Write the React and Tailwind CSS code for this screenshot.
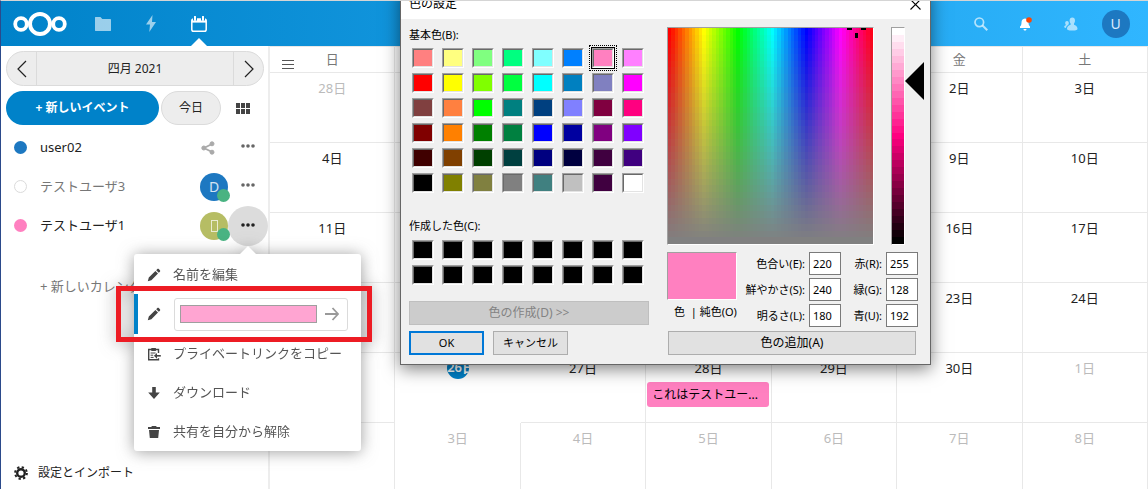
import { useState } from "react";

const WEEKDAYS = ["日", "月", "火", "水", "木", "金", "土"];

const WEEKS = [
  [28, 29, 30, 31, 1, 2, 3],
  [4, 5, 6, 7, 8, 9, 10],
  [11, 12, 13, 14, 15, 16, 17],
  [18, 19, 20, 21, 22, 23, 24],
  [25, 26, 27, 28, 29, 30, 1],
  [2, 3, 4, 5, 6, 7, 8],
];

const BASIC_COLORS = [
  "#ff8080", "#ffff80", "#80ff80", "#00ff80", "#80ffff", "#0080ff", "#ff80c0", "#ff80ff",
  "#ff0000", "#ffff00", "#80ff00", "#00ff40", "#00ffff", "#0080c0", "#8080c0", "#ff00ff",
  "#804040", "#ff8040", "#00ff00", "#008080", "#004080", "#8080ff", "#800040", "#ff0080",
  "#800000", "#ff8000", "#008000", "#008040", "#0000ff", "#0000a0", "#800080", "#8000ff",
  "#400000", "#804000", "#004000", "#004040", "#000080", "#000040", "#400040", "#400080",
  "#000000", "#808000", "#808040", "#808080", "#408080", "#c0c0c0", "#400040", "#ffffff",
];

const CUSTOM_COLORS = Array(16).fill("#000000");

function Logo() {
  return (
    <svg width="54" height="26" viewBox="0 0 54 26" fill="none" stroke="#fff" aria-hidden="true">
      <circle cx="8" cy="13" r="5.8" strokeWidth="3.8" />
      <circle cx="27" cy="13" r="10" strokeWidth="4" />
      <circle cx="46" cy="13" r="5.8" strokeWidth="3.8" />
    </svg>
  );
}

function PencilIcon() {
  return (
    <svg width="14" height="14" viewBox="0 0 14 14" fill="#444" aria-hidden="true">
      <path d="M10.3 1.1c.5-.5 1-.5 1.500 0l1.100 1.100c.5.5.5 1 0 1.500l-1.100 1.100-2.600-2.600zM8.400 3l2.600 2.600-6.600 6.600L.8 13.200l1-3.600z" />
    </svg>
  );
}

function ClipboardIcon() {
  return (
    <svg width="14" height="14" viewBox="0 0 14 14" fill="none" stroke="#444" strokeWidth="1.4" aria-hidden="true">
      <path d="M11.500 6V2.500H1.700v10.300h9.800v-1.600" />
      <path d="M4.300 2.500h4.600" strokeWidth="3" />
      <path d="M3.600 6h5M3.600 8.200h2.600M3.600 10.400h3" strokeWidth="1" />
      <path d="M13.800 8.800H8.200" strokeWidth="1.6" />
      <path d="M10 5.900L6.900 8.800l3.100 2.900z" fill="#444" stroke="none" />
    </svg>
  );
}

function DownloadIcon() {
  return (
    <svg width="14" height="14" viewBox="0 0 14 14" fill="#444" aria-hidden="true">
      <path d="M5.200 1h3.600v5.600h4L7 13 1.200 6.600h4z" />
    </svg>
  );
}

function TrashIcon() {
  return (
    <svg width="14" height="14" viewBox="0 0 14 14" fill="#444" aria-hidden="true">
      <path d="M5 1h4l.8 1H13v2H1V2h3.200zM2 5h10l-.8 8H2.800z" />
    </svg>
  );
}

function GearIcon() {
  return (
    <svg width="14" height="14" viewBox="0 0 14 14" fill="none" stroke="#222" aria-hidden="true">
      <circle cx="7" cy="7" r="3.8" strokeWidth="2.4" />
      <circle cx="7" cy="7" r="5.9" strokeWidth="2" strokeDasharray="2.3 2.33" />
    </svg>
  );
}

function DotsIcon({ color = "#666" }) {
  return (
    <svg width="14" height="4" viewBox="0 0 14 4" fill={color} aria-hidden="true">
      <circle cx="2" cy="2" r="1.8" />
      <circle cx="7" cy="2" r="1.8" />
      <circle cx="12" cy="2" r="1.8" />
    </svg>
  );
}

function Header() {
  return (
    <header className="flex h-[45px] shrink-0 items-stretch bg-[linear-gradient(90deg,#0082c9,#30b6ff)] pr-[10px]">
      <a href="#home" aria-label="ホーム" className="flex items-center pr-3 pl-3">
        <Logo />
      </a>
      <nav className="flex flex-1">
        <a href="#files" aria-label="ファイル" className="flex w-12 items-center justify-center">
          <svg width="16" height="14" viewBox="0 0 16 14" fill="#fff" fillOpacity=".6">
            <path d="M.5 0h5l1.800 2H15c.6 0 1 .3 1 1v10.500c0 .3-.2.5-.5.5H.5c-.3 0-.5-.2-.5-.5V.5C0 .2.2 0 .5 0z" />
          </svg>
        </a>
        <a href="#activity" aria-label="アクティビティ" className="flex w-12 items-center justify-center">
          <svg width="12" height="17" viewBox="0 0 12 17" fill="#fff" fillOpacity=".6">
            <path d="M7.500 0L1 9.500h4L4.300 17 11 7H7z" />
          </svg>
        </a>
        <a href="#calendar" aria-label="カレンダー" className="relative flex w-12 items-center justify-center">
          <svg width="16" height="16" viewBox="0 0 16 16" fill="none" stroke="#fff">
            <rect x=".8" y="3" width="14.4" height="12.2" rx="1.8" strokeWidth="1.5" />
            <path d="M1 4.800h14" strokeWidth="3.6" />
            <path d="M4 .5v4M12 .5v4" stroke="#0a8ad4" strokeWidth="4" />
            <path d="M4 .8v3.200M12 .8v3.200" strokeWidth="2" strokeLinecap="round" />
          </svg>
          <span className="absolute bottom-0 left-4 border-x-8 border-b-8 border-x-transparent border-b-white" />
        </a>
      </nav>
      <button aria-label="検索" className="flex w-[45px] items-center justify-center">
        <svg width="14" height="14" viewBox="0 0 14 14" fill="none" stroke="#fff" strokeOpacity=".65" strokeWidth="1.7">
          <circle cx="5.3" cy="5.3" r="4.3" />
          <path d="M8.500 8.500l4.800 4.700" strokeWidth="2" />
        </svg>
      </button>
      <button aria-label="通知" className="flex w-[45px] items-center justify-center">
        <svg width="16" height="14" viewBox="0 0 16 14" fill="#fff">
          <path d="M7 1.500c-2.500.3-3.500 2-3.500 4C3.500 8 2.800 8.700 2 9.600V11h10V9.600c-.9-.9-1.500-1.800-1.500-4 0-2-1-3.800-3.500-4.100z" />
          <path d="M5.500 12h3c0 2-3 2-3 0z" />
          <circle cx="11" cy="3" r="2.8" fill="#ff4402" />
        </svg>
      </button>
      <button aria-label="連絡先" className="flex w-[45px] items-center justify-center">
        <svg width="14" height="14" viewBox="0 0 14 14" fill="#fff" fillOpacity=".6">
          <path d="M8.300.5c1.700 0 2.700 1.200 2.700 3 0 1.500-.5 2.300-1 3v1.200c1.500.8 3.500 1.500 3.500 4 0 1-1 1.800-5.200 1.800S3 12.700 3 11.700C3 9.200 5 8.500 6.600 7.700V6.500c-.6-.7-1-1.500-1-3 0-1.800 1-3 2.700-3z" />
          <path d="M3 4c1.200 0 1.800.9 1.800 2 0 1-.3 1.500-.6 2-1.500.6-2 1.800-2.200 3-1.500-.1-1.800-.6-1.800-1C.2 9 1 8.500 2 8c-.5-.5-.8-1-.8-2C1.200 4.900 1.800 4 3 4z" />
        </svg>
      </button>
      <button aria-label="設定" className="flex w-[45px] items-center justify-center">
        <span className="flex size-7 items-center justify-center rounded-full bg-[#1d78c1] text-sm text-blue-100">U</span>
      </button>
    </header>
  );
}

function MenuItem({ icon, children }) {
  return (
    <button className="flex h-[39px] w-full items-center gap-3 pl-[13px] text-left text-[#555]">
      {icon}
      <span>{children}</span>
    </button>
  );
}

function CalendarMenu() {
  return (
    <div className="absolute top-12 left-[133px] z-10 w-[227px] rounded-[3px] bg-white pt-px drop-shadow-[0_1px_8px_rgba(77,77,77,0.55)]">
      <span className="absolute -top-2 left-[106px] border-x-8 border-b-8 border-x-transparent border-b-white" />
      <MenuItem icon={<PencilIcon />}>名前を編集</MenuItem>
      <div className="flex h-10 items-center gap-[13px] border-l-4 border-[#0082c9] pr-[13px] pl-[9px]">
        <PencilIcon />
        <div className="flex h-[33px] flex-1 items-center gap-2 rounded-[3px] border border-[#dbdbdb] pl-[5px]">
          <input
            type="color"
            aria-label="カレンダーの色"
            defaultValue="#ff80c0"
            className="h-[18px] w-[137px] appearance-none border border-[#777] opacity-70 [&::-webkit-color-swatch]:rounded-none [&::-webkit-color-swatch]:border-0 [&::-webkit-color-swatch-wrapper]:p-0"
          />
          <button aria-label="保存">
            <svg width="14" height="14" viewBox="0 0 14 14" fill="none" stroke="#999" strokeWidth="1.8">
              <path d="M0 7h13M7.500 1l5.500 6-5.500 6" />
            </svg>
          </button>
        </div>
      </div>
      <MenuItem icon={<ClipboardIcon />}>プライベートリンクをコピー</MenuItem>
      <MenuItem icon={<DownloadIcon />}>ダウンロード</MenuItem>
      <MenuItem icon={<TrashIcon />}>共有を自分から解除</MenuItem>
      <div className="pointer-events-none absolute top-8 -left-[18px] h-14 w-64 border-5 border-[#ed1c24]" />
    </div>
  );
}

function Avatar({ letter, className }) {
  return (
    <span className={`relative flex size-7 items-center justify-center rounded-full text-sm text-white/80 ${className}`}>
      {letter}
      <span className="absolute top-4 left-[17px] size-[13px] rounded-full bg-[#49b382]" />
    </span>
  );
}

function CalendarRow({ name, bullet, muted, active, children }) {
  return (
    <li className="relative flex h-[39px] items-center pl-[13px]">
      <span className={`size-[13px] rounded-full ${bullet}`} />
      <span className={`ml-[13px] flex-1 ${muted ? "text-[#777]" : "text-[#222]"}`}>{name}</span>
      {children}
      <button
        aria-label={`${name}のメニュー`}
        className={`flex size-10 items-center justify-center rounded-full ${active ? "bg-[#dcdcdc] pb-0.5" : "pb-1"}`}
      >
        <DotsIcon color={active ? "#222" : "#666"} />
      </button>
      {active && <CalendarMenu />}
    </li>
  );
}

function Sidebar() {
  return (
    <aside className="relative z-10 flex w-[269px] shrink-0 flex-col border-r-2 border-[#ededed] pt-[5px]">
      <div className="mr-1 ml-[5px] flex h-[35px] rounded-full border border-[#dbdbdb] bg-[#ededed]">
        <button aria-label="前の月" className="flex w-[30px] items-center justify-center border-r border-[#dbdbdb]">
          <svg width="10" height="18" viewBox="0 0 10 18" fill="none" stroke="#222" strokeWidth="1.2">
            <path d="M9 1L1 9l8 8" />
          </svg>
        </button>
        <button className="flex-1 text-xs text-[#222]">四月 2021</button>
        <button aria-label="次の月" className="flex w-[30px] items-center justify-center border-l border-[#dbdbdb]">
          <svg width="10" height="18" viewBox="0 0 10 18" fill="none" stroke="#222" strokeWidth="1.2">
            <path d="M1 1l8 8-8 8" />
          </svg>
        </button>
      </div>
      <div className="mt-[5px] mb-[3px] ml-[5px] flex h-[34px] gap-0.5">
        <button className="w-[153px] rounded-full bg-[#0082c9] text-xs font-bold text-white">+ 新しいイベント</button>
        <button className="w-[60px] rounded-full border border-[#dbdbdb] bg-[#ededed] text-xs text-[#222]">今日</button>
        <button aria-label="表示の切り替え" className="flex w-10 items-center justify-center">
          <svg width="14" height="11" viewBox="0 0 14 11" fill="#444">
            <path d="M0 0h4v5H0zM5 0h4v5H5zM10 0h4v5h-4zM0 6h4v5H0zM5 6h4v5H5zM10 6h4v5h-4z" />
          </svg>
        </button>
      </div>
      <ul>
        <CalendarRow name="user02" bullet="bg-[#1d78c1]">
          <button aria-label="共有" className="mr-[13px]">
            <svg width="14" height="14" viewBox="0 0 14 14" fill="#aaa" stroke="#aaa">
              <path d="M11 3L3 7l8 4" fill="none" strokeWidth="1.8" />
              <circle cx="11" cy="2.8" r="2" />
              <circle cx="2.8" cy="7" r="2" />
              <circle cx="11" cy="11.2" r="2" />
            </svg>
          </button>
        </CalendarRow>
        <CalendarRow name="テストユーザ3" bullet="border border-[#dbdbdb]" muted>
          <Avatar letter="D" className="bg-[#1d78c1]" />
        </CalendarRow>
        <CalendarRow name="テストユーザ1" bullet="bg-[#ff80c0]" active>
          <Avatar letter={<span className="h-3 w-[7px] border border-white/70" />} className="bg-[#b6bd64]" />
        </CalendarRow>
      </ul>
      <button className="mt-[22px] h-10 pl-[39px] text-left whitespace-nowrap text-[#777]">+ 新しいカレンダー</button>
      <button className="mt-auto mb-2 flex items-center gap-[10px] pl-[13px] text-xs text-[#222]">
        <GearIcon />
        設定とインポート
      </button>
    </aside>
  );
}

function DayCell({ day, outside, today, event }) {
  return (
    <td className={`h-[70px] border-[#e8e8e8] p-0 px-px pt-[7px] align-top ${today ? "" : "border-r border-b"}`}>
      {today ? (
        <span className="mx-auto -mt-[3px] flex size-[22px] items-center overflow-hidden rounded-full bg-[#0082c9] font-semibold whitespace-nowrap text-white">
          {day}日
        </span>
      ) : (
        <div className={`text-center leading-4 ${outside ? "text-[#bbb]" : "text-[#222]"}`}>{day}日</div>
      )}
      {event && (
        <a href="#event" className="mt-[6px] mr-px block h-[25px] truncate rounded-[3px] bg-[#ff80c0] px-[5px] text-xs leading-[25px] text-black">
          {event}
        </a>
      )}
    </td>
  );
}

function MonthGrid() {
  return (
    <main className="relative min-w-0 flex-1">
      <button aria-label="メニューを開く" className="absolute top-[14px] left-3 z-10">
        <svg width="12" height="10" viewBox="0 0 12 10" stroke="#555">
          <path d="M0 .5h12M0 4.500h12M0 8.500h12" />
        </svg>
      </button>
      <table className="w-full table-fixed border-separate border-spacing-0">
        <thead>
          <tr>
            {WEEKDAYS.map((day) => (
              <th key={day} className="h-[27px] border-t border-r border-b border-[#e8e8e8] p-0 font-normal text-[#777]">
                {day}
              </th>
            ))}
          </tr>
        </thead>
        <tbody>
          {WEEKS.map((week, row) => (
            <tr key={row}>
              {week.map((day, col) => (
                <DayCell
                  key={col}
                  day={day}
                  outside={(row === 0 && day > 7) || (row > 3 && day < 20)}
                  today={row === 4 && day === 26}
                  event={row === 4 && day === 28 ? "これはテストユー..." : null}
                />
              ))}
            </tr>
          ))}
        </tbody>
      </table>
    </main>
  );
}

function SwatchGrid({ colors, selected, onSelect }) {
  return (
    <div className="ml-[3px] grid w-fit grid-cols-8 gap-x-2 gap-y-[5px]">
      {colors.map((color, i) => (
        <button
          key={i}
          aria-label={color}
          onClick={() => onSelect && onSelect(i)}
          className={`h-5 w-[22px] border border-t-[#a0a0a0] border-r-white border-b-white border-l-[#a0a0a0] ${
            i === selected ? "ring-1 ring-black outline-1 outline-offset-2 outline-black outline-dotted" : ""
          }`}
        >
          <span
            className="block size-full border border-t-[#696969] border-r-[#e3e3e3] border-b-[#e3e3e3] border-l-[#696969]"
            style={{ backgroundColor: color }}
          />
        </button>
      ))}
    </div>
  );
}

// Hue runs left to right, saturation falls off to gray at the bottom.
function Spectrum() {
  const cols = 60;
  const rows = 33;
  return (
    <svg width="205" height="216" viewBox="0 0 60 33" preserveAspectRatio="none" shapeRendering="crispEdges" className="box-content border border-t-[#a0a0a0] border-r-white border-b-white border-l-[#a0a0a0]">
      {Array.from({ length: cols }, (_, i) => (
        <rect key={i} x={i} width={cols - i} height="33" fill={`hsl(${i * 6} 100% 50%)`} />
      ))}
      {Array.from({ length: rows }, (_, i) => (
        <rect key={i} y={i} width="60" height="1" fill="#808080" fillOpacity={i / (rows - 1)} />
      ))}
      <path d="M52.400 0h1.400v.3h-1.400zM56.500 0h1.400v.3h-1.400zM54.700.8h.9v.8h-.9z" />
    </svg>
  );
}

function LuminanceBar() {
  const steps = 31;
  return (
    <svg width="12" height="216" viewBox="0 0 12 31" preserveAspectRatio="none" shapeRendering="crispEdges" className="box-content border border-t-[#a0a0a0] border-r-white border-b-white border-l-[#a0a0a0]">
      {Array.from({ length: steps }, (_, i) => (
        <rect key={i} y={i} width="12" height={steps - i} fill={`hsl(330 100% ${100 - (i * 100) / (steps - 1)}%)`} />
      ))}
    </svg>
  );
}

function NumberField({ id, label, value }) {
  return (
    <div className="flex items-center justify-end gap-1">
      <label htmlFor={id} className="whitespace-nowrap">{label}</label>
      <input id={id} defaultValue={value} className="h-[23px] w-8 border border-[#7a7a7a] bg-white pl-[3px]" />
    </div>
  );
}

function DialogButton({ className = "", ...props }) {
  return <button className={`h-6 border border-[#adadad] bg-[#e1e1e1] ${className}`} {...props} />;
}

function ColorDialog() {
  const [selected, setSelected] = useState(6);

  return (
    <div
      role="dialog"
      aria-label="色の設定"
      className="absolute -top-[13px] left-[399px] z-20 w-[531px] border border-[#666] bg-[#f0f0f0] text-[11px] leading-4 text-black shadow-[0_4px_16px_rgba(0,0,0,0.5)]"
    >
      <div className="flex h-[30px] items-center justify-between bg-white pr-[9px] pl-2 text-xs">
        <h2>色の設定</h2>
        <button aria-label="閉じる">
          <svg width="11" height="11" viewBox="0 0 11 11" stroke="#000" strokeWidth="1.1">
            <path d="M.5.5l10 10M10.500.5l-10 10" />
          </svg>
        </button>
      </div>
      <div className="flex gap-[18px] pt-2 pb-[9px] pl-2">
        <div className="w-60">
          <p className="mb-[5px]">基本色(B):</p>
          <SwatchGrid colors={BASIC_COLORS} selected={selected} onSelect={setSelected} />
          <p className="mt-[25px] mb-[6px]">作成した色(C):</p>
          <SwatchGrid colors={CUSTOM_COLORS} />
          <button disabled className="mt-4 block h-6 w-full border border-[#bfbfbf] bg-[#ccc] text-xs text-[#838383]">
            色の作成(D) &gt;&gt;
          </button>
          <div className="mt-[6px] flex gap-[9px]">
            <button className="h-6 w-[75px] border-2 border-[#0078d7] bg-[#e1e1e1]">OK</button>
            <DialogButton className="w-[75px]">キャンセル</DialogButton>
          </div>
        </div>
        <div className="w-[258px]">
          <div className="flex">
            <Spectrum />
            <span className="w-[17px]" />
            <LuminanceBar />
            <svg width="20" height="38" viewBox="0 0 20 38" className="mt-[35px]">
              <path d="M0 19L19 0v38z" />
            </svg>
          </div>
          <div className="mt-[7px] flex">
            <div className="w-[74px] whitespace-nowrap">
              <div className="h-12 w-[70px] border border-t-[#a0a0a0] border-r-white border-b-white border-l-[#a0a0a0] bg-[#ff80c0]" />
              <p className="mt-1 pl-[7px]">色&nbsp; | 純色(O)</p>
            </div>
            <div className="flex w-[100px] flex-col gap-[3px]">
              <NumberField id="hue" label="色合い(E):" value="220" />
              <NumberField id="sat" label="鮮やかさ(S):" value="240" />
              <NumberField id="lum" label="明るさ(L):" value="180" />
            </div>
            <div className="flex w-[77px] flex-col gap-[3px]">
              <NumberField id="red" label="赤(R):" value="255" />
              <NumberField id="green" label="緑(G):" value="128" />
              <NumberField id="blue" label="青(U):" value="192" />
            </div>
          </div>
          <DialogButton className="mt-1 ml-px block w-[248px] text-xs">色の追加(A)</DialogButton>
        </div>
      </div>
    </div>
  );
}

export default function App() {
  return (
    <div className="relative flex h-screen flex-col overflow-hidden border-t border-l border-t-[#d5d5d5] border-l-[#2b4a8b] bg-white font-['Noto_Sans','Noto_Sans_CJK_JP',sans-serif] text-[13px]">
      <Header />
      <div className="flex min-h-0 flex-1">
        <Sidebar />
        <MonthGrid />
      </div>
      <ColorDialog />
    </div>
  );
}
